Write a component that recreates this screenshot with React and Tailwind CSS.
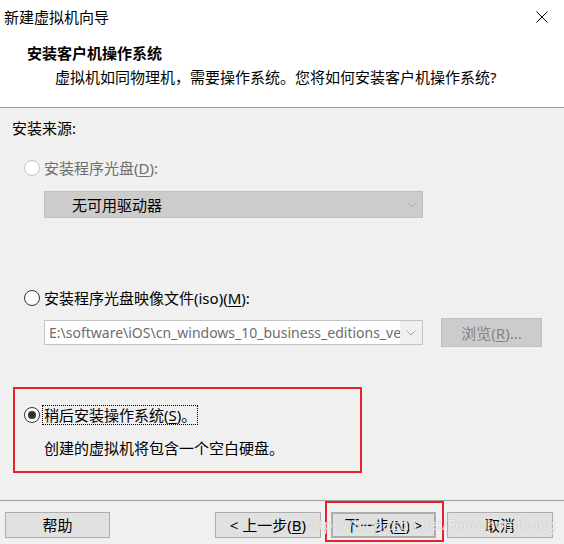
import React from "react"

const font = { fontFamily: '"Segoe UI", "Noto Sans", "Noto Sans CJK SC", sans-serif' }

function Radio({ checked, disabled }) {
  return (
    <span
      className={`w-[16px] h-[16px] rounded-full border flex items-center justify-center bg-white shrink-0 ${
        disabled ? "border-[#c4c4c4]" : "border-[#333333]"
      }`}
    >
      {checked && <span className="w-[8px] h-[8px] rounded-full bg-[#333333]" />}
    </span>
  )
}

function Chevron({ color }) {
  return (
    <svg width="10" height="6" viewBox="0 0 10 6" className="shrink-0">
      <polyline points="0.5,0.5 5,5 9.5,0.5" fill="none" stroke={color} strokeWidth="1" />
    </svg>
  )
}

function Key({ children }) {
  return <span className="underline underline-offset-2">{children}</span>
}

function Button({ children, className = "" }) {
  return (
    <div
      className={`h-[26px] flex items-center justify-center bg-[#e1e1e1] border border-[#adadad] text-[15px] text-black ${className}`}
    >
      {children}
    </div>
  )
}

export default function App() {
  return (
    <div
      className="relative w-[564px] h-[544px] bg-[#f0f0f0] flex flex-col overflow-hidden text-[15px] leading-[20px] text-black"
      style={font}
    >
      {/* header */}
      <div className="h-[108px] bg-white border-b border-[#a0a0a0] shrink-0">
        <div className="h-[34px] flex items-center justify-between pl-[4px] pr-[16px]">
          <span>新建虚拟机向导</span>
          <svg width="12" height="12" viewBox="0 0 12 12">
            <path d="M0.5 0.5 L11.5 11.5 M11.5 0.5 L0.5 11.5" stroke="#000" strokeWidth="1" />
          </svg>
        </div>
        <div className="mt-[9px] pl-[27px] font-bold">安装客户机操作系统</div>
        <div className="mt-[4px] pl-[55px]">
          虚拟机如同物理机，需要操作系统。您将如何安装客户机操作系统?
        </div>
      </div>

      {/* body */}
      <div className="mt-[10px] pl-[12px] h-[20px]">安装来源:</div>

      <div className="mt-[20px] h-[20px] flex items-center pl-[24px] gap-[4px] text-[#6d6d6d]">
        <Radio disabled />
        <span>
          安装程序光盘(<Key>D</Key>):
        </span>
      </div>

      <div className="mt-[13px] ml-[44px] w-[379px] h-[27px] bg-[#cccccc] border border-[#bfbfbf] flex items-center justify-between pl-[27px] pr-[5px]">
        <span>无可用驱动器</span>
        <Chevron color="#a8a8a8" />
      </div>

      <div className="mt-[70px] h-[20px] flex items-center pl-[24px] gap-[4px]">
        <Radio />
        <span>
          安装程序光盘映像文件(iso)(<Key>M</Key>):
        </span>
      </div>

      <div className="mt-[10px] h-[29px] flex items-center pl-[44px]">
        <div className="w-[379px] h-[25px] border border-[#c4c4c4] flex items-center">
          <div className="w-[355px] h-full bg-white flex items-center pl-[4px] overflow-hidden whitespace-nowrap text-[14px] text-[#6d6d6d]">
            E:\software\iOS\cn_windows_10_business_editions_ve
          </div>
          <div className="flex-1 flex items-center justify-center">
            <Chevron color="#a8a8a8" />
          </div>
        </div>
        <div className="ml-[18px] w-[101px] h-[29px] bg-[#cccccc] border border-[#bfbfbf] flex items-center justify-center text-[#838383]">
          浏览(<Key>R</Key>)...
        </div>
      </div>

      <div className="mt-[40px] ml-[13px] w-[349px] h-[86px] border-2 border-[#e8222a] flex flex-col shrink-0">
        <div className="mt-[16px] h-[20px] flex items-center pl-[9px] gap-[2px]">
          <Radio checked />
          <span className="border border-dotted border-black px-[1px] leading-[18px]">
            稍后安装操作系统(<Key>S</Key>)。
          </span>
        </div>
        <div className="mt-[13px] pl-[29px]">创建的虚拟机将包含一个空白硬盘。</div>
      </div>

      <div className="mt-[27px] h-px bg-[#a0a0a0] shrink-0" />

      <div className="mt-[11px] flex items-center pl-[5px]">
        <Button className="w-[105px]">帮助</Button>
        <Button className="ml-[105px] w-[106px]">
          &lt; 上一步(<Key>B</Key>)
        </Button>
        <div className="relative ml-[10px]">
          <Button className="w-[105px] border-2 border-[#0078d7]">
            下一步(<Key>N</Key>) &gt;
          </Button>
          <div className="absolute left-[-6px] right-[-8px] top-[-11px] bottom-[-4px] border-2 border-[#e8222a]" />
        </div>
        <Button className="ml-[11px] w-[106px]">取消</Button>
      </div>

      {/* watermark */}
      <div
        className="absolute left-[305px] top-[515px] text-[14px] whitespace-nowrap text-white/80"
        style={{ textShadow: "0 0 1px rgba(120,120,120,0.6)" }}
      >
        https://blog.csdn.net/Fengzhonghong
      </div>
    </div>
  )
}
